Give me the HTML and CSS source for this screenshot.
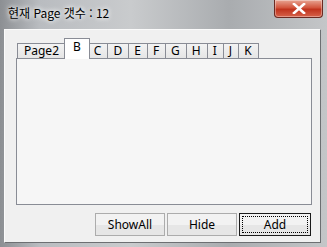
FILE: index.html
```html
<!DOCTYPE html>
<html lang="ko">

<head>
     <meta charset="UTF-8">
     <meta name="viewport" content="width=device-width, initial-scale=1.0">
     <title>현재 Page 갯수</title>
     <link rel="stylesheet" href="styles.css">
</head>

<body>
     <div class="window">
          <!-- title bar -->
          <div class="titlebar">
               <span class="title">현재 Page 갯수 : 12</span>
               <div class="close-btn">
                    <svg width="14" height="11" viewBox="0 0 14 11">
                         <path d="M2 1 L12 10 M12 1 L2 10" stroke="#fff" stroke-width="2.6" stroke-linecap="square" />
                    </svg>
               </div>
          </div>

          <div class="client">
               <div class="tab-strip">
                    <div class="tab">Page2</div>
                    <div class="tab active">B</div>
                    <div class="tab">C</div>
                    <div class="tab">D</div>
                    <div class="tab">E</div>
                    <div class="tab">F</div>
                    <div class="tab">G</div>
                    <div class="tab">H</div>
                    <div class="tab">I</div>
                    <div class="tab">J</div>
                    <div class="tab">K</div>
               </div>
               <div class="tab-panel"></div>

               <div class="button-row">
                    <button class="btn">ShowAll</button>
                    <button class="btn">Hide</button>
                    <button class="btn default"><span class="focus">Add</span></button>
               </div>
          </div>
     </div>
</body>

</html>
```

FILE: styles.css
```css
* {
     padding: 0;
     margin: 0;
     box-sizing: border-box;
}

body {
     width: 327px;
     height: 247px;
     overflow: hidden;
     font-family: "Noto Sans", "Noto Sans CJK KR", sans-serif;
     font-size: 12px;
     color: #000;
}

.window {
     width: 327px;
     height: 247px;
     background: linear-gradient(90deg, #8c8f93 0%, #b9bcc0 12%, #c9cbcd 40%, #a9acaf 70%, #c4c6c8 100%);
     display: flex;
     flex-direction: column;
}

.titlebar {
     height: 29px;
     display: flex;
     justify-content: space-between;
     align-items: flex-start;
     padding-left: 8px;
     padding-right: 4px;
}

.title {
     margin-top: 5px;
     font-family: "Noto Sans CJK KR", sans-serif;
     font-size: 12px;
     line-height: 16px;
     text-shadow: 0 0 6px #fff, 0 0 4px #fff;
}

.close-btn {
     width: 49px;
     height: 18px;
     border: 1px solid #6b2a22;
     border-top: none;
     border-radius: 0 0 4px 4px;
     background: linear-gradient(#e8a593 0%, #d2553d 45%, #c0331d 55%, #d6624a 100%);
     display: flex;
     justify-content: center;
     align-items: center;
     box-shadow: inset 0 0 0 1px rgba(255, 255, 255, 0.35);
}

.client {
     margin-left: 4px;
     width: 317px;
     height: 214px;
     background: #f0f0f0;
     border-top: 1px solid #fbfbfb;
     border-left: 1px solid #fbfbfb;
     border-right: 1px solid #6d6f72;
     border-bottom: 1px solid #6d6f72;
     padding: 7px 0 0 11px;
}

.tab-strip {
     display: flex;
     align-items: flex-end;
     height: 21px;
     padding-left: 1px;
}

.tab {
     height: 15px;
     padding: 0 6px 0 5px;
     border: 1px solid #898c95;
     border-bottom: none;
     border-left: none;
     background: linear-gradient(#f3f3f3, #e5e5e5);
     font-size: 12px;
     line-height: 14px;
     position: relative;
}

.tab:first-child {
     border-left: 1px solid #898c95;
     padding: 0 6px;
}

.tab.active {
     height: 21px;
     margin: 0 -1px 0 -2px;
     padding: 0 8px;
     background: #fff;
     border-left: 1px solid #898c95;
     z-index: 1;
     line-height: 16px;
     top: 1px;
}

.tab-panel {
     width: 296px;
     height: 147px;
     border: 1px solid #898c95;
     background: #f6f6f6;
}

.button-row {
     display: flex;
     gap: 2px;
     margin-top: 8px;
     padding-left: 79px;
}

.btn {
     width: 70px;
     height: 23px;
     font-family: "Noto Sans", sans-serif;
     font-size: 12px;
     border: 1px solid #acacac;
     background: linear-gradient(#f2f2f2 50%, #e6e6e6 50%);
     color: #000;
     display: flex;
     justify-content: center;
     align-items: center;
}

.btn.default {
     width: 72px;
     border: 1px solid #1a1a1a;
     padding: 2px;
}

.focus {
     flex: 1;
     align-self: stretch;
     border: 1px dotted #000;
     display: flex;
     justify-content: center;
     align-items: center;
}
```
